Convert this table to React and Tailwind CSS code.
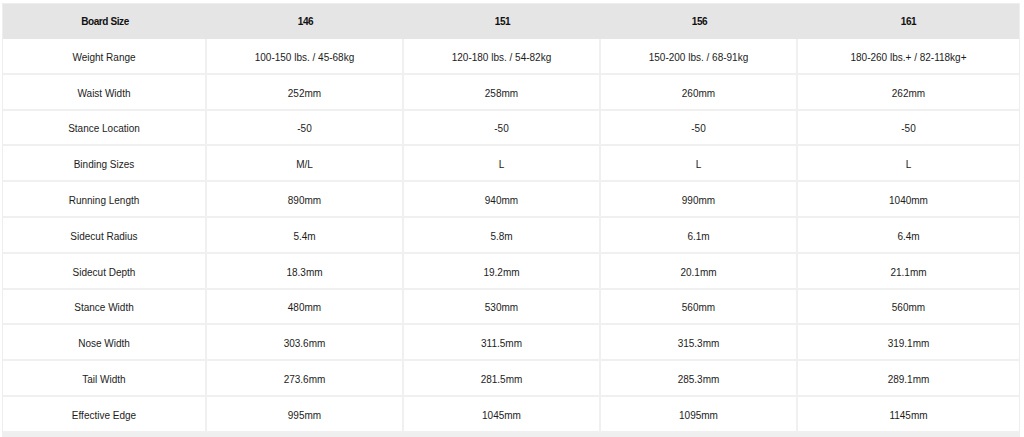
const cols = ["146", "151", "156", "161"];

const rows = [
  ["Weight Range", "100-150 lbs. / 45-68kg", "120-180 lbs. / 54-82kg", "150-200 lbs. / 68-91kg", "180-260 lbs.+ / 82-118kg+"],
  ["Waist Width", "252mm", "258mm", "260mm", "262mm"],
  ["Stance Location", "-50", "-50", "-50", "-50"],
  ["Binding Sizes", "M/L", "L", "L", "L"],
  ["Running Length", "890mm", "940mm", "990mm", "1040mm"],
  ["Sidecut Radius", "5.4m", "5.8m", "6.1m", "6.4m"],
  ["Sidecut Depth", "18.3mm", "19.2mm", "20.1mm", "21.1mm"],
  ["Stance Width", "480mm", "530mm", "560mm", "560mm"],
  ["Nose Width", "303.6mm", "311.5mm", "315.3mm", "319.1mm"],
  ["Tail Width", "273.6mm", "281.5mm", "285.3mm", "289.1mm"],
  ["Effective Edge", "995mm", "1045mm", "1095mm", "1145mm"],
];

const grid = "grid grid-cols-[204px_197px_197px_197px_1fr]";

export default function App() {
  return (
    <div className="h-[437px] w-[1024px] overflow-hidden bg-white font-['Liberation_Sans',Arial,sans-serif] text-[10px] text-[#1c1c1c]">
      <div className="ml-[2px] mt-[3px] w-[1018px] border-x border-t border-[#eeeeee]">
        <div className={`${grid} h-[35px] bg-[#e5e5e5] font-bold tracking-[-0.04em] text-[#111]`}>
          <div className="flex items-center justify-center">Board Size</div>
          {cols.map((c) => (
            <div key={c} className="flex items-center justify-center">
              {c}
            </div>
          ))}
        </div>
        {rows.map((r) => (
          <div key={r[0]} className={`${grid} h-[35.8px] border-b-2 border-[#f0f0f0]`}>
            {r.map((cell, i) => (
              <div
                key={i}
                className={`flex items-center justify-center pt-[3px] ${i < 4 ? "border-r-2 border-[#f0f0f0]" : ""}`}
              >
                {cell}
              </div>
            ))}
          </div>
        ))}
      </div>
      <div className="ml-[2px] h-[6px] w-[1018px] bg-[#efefef]" />
    </div>
  );
}
